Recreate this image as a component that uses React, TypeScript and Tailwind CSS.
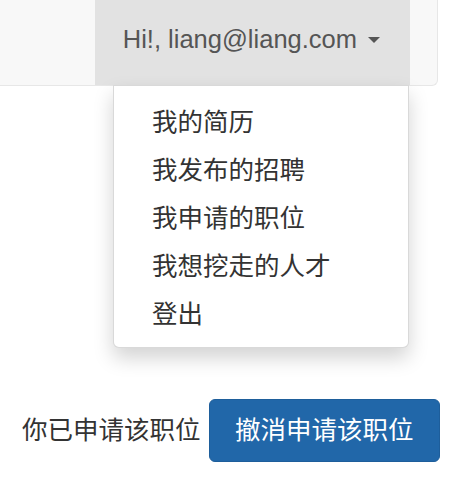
const menuItems = ['我的简历', '我发布的招聘', '我申请的职位', '我想挖走的人才', '登出']

const font = "font-['Liberation_Sans','Noto_Sans_CJK_SC',sans-serif]"

export default function App() {
  return (
    <div className={`min-h-[500px] bg-white ${font}`}>
      {/* Navbar */}
      <div className="mr-[17px] flex h-[86px] justify-end rounded-br-[6px] border-r border-b border-[#e7e7e7] bg-[#f8f8f8] pr-[27px]">
        <div className="relative">
          <div className="flex h-[85px] items-center bg-[#e2e2e2] pr-[30px] pb-[6px] pl-[28px] text-[25.5px] text-[#555]">
            Hi!, liang@liang.com
            <span className="ml-[11px] h-0 w-0 border-x-[6px] border-t-[6px] border-x-transparent border-t-[#555]" />
          </div>

          {/* Dropdown */}
          <ul className="absolute top-[85px] right-[1px] z-10 w-[296px] rounded-b-[6px] border border-black/15 bg-white pt-[12px] pb-[9px] shadow-[0_10px_20px_rgba(0,0,0,0.175)]">
            {menuItems.map(item => (
              <li key={item} className="flex h-[48px] items-center pl-[38px] text-[25.5px] text-[#333]">
                {item}
              </li>
            ))}
          </ul>
        </div>
      </div>

      {/* Applied state */}
      <div className="mt-[313px] flex items-center pl-[22px]">
        <span className="text-[25.5px] text-[#333]">你已申请该职位</span>
        <button className="ml-[8px] flex h-[63px] items-center rounded-[6px] border border-[#1e5e9b] bg-[#2167a9] px-[25.5px] text-[25.5px] text-white">
          撤消申请该职位
        </button>
      </div>
    </div>
  )
}
